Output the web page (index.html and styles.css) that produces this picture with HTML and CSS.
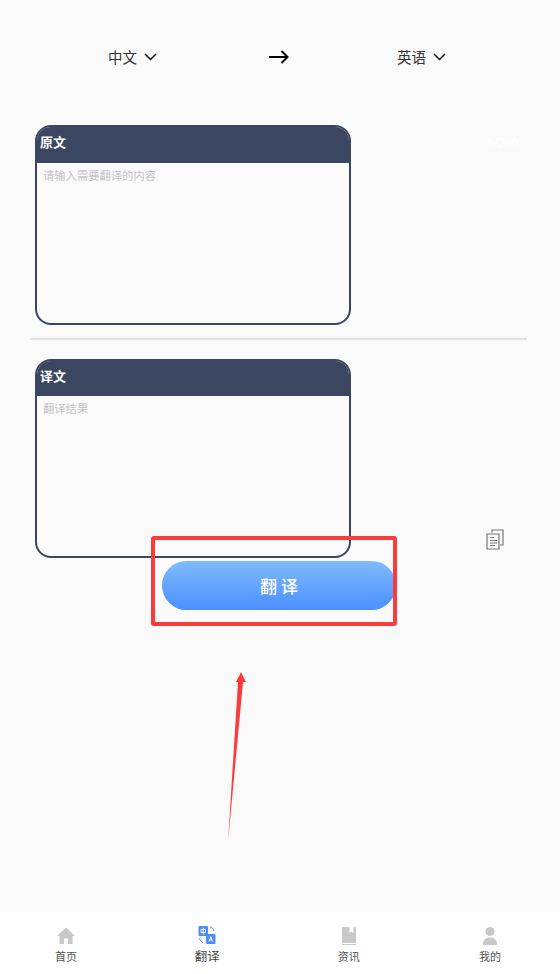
FILE: index.html
```html
<!DOCTYPE html>
<html lang="zh">
<head>
<meta charset="utf-8">
<title>翻译</title>
<link rel="stylesheet" href="styles.css">
</head>
<body>
<div class="page">
  <header class="langs">
    <div class="lang lang-from"><span>中文</span>
      <svg class="chev" viewBox="0 0 13 8"><path d="M1 1l5.500 5.500L12 1"/></svg>
    </div>
    <svg class="swap" viewBox="0 0 20 14"><path d="M0 7h18.500M12.500 1l6 6-6 6"/></svg>
    <div class="lang lang-to"><span>英语</span>
      <svg class="chev" viewBox="0 0 13 8"><path d="M1 1l5.500 5.500L12 1"/></svg>
    </div>
  </header>

  <section class="row row-source">
    <div class="card">
      <div class="card-head">原文</div>
      <div class="card-body">请输入需要翻译的内容</div>
    </div>
    <span class="count">0/200</span>
  </section>

  <hr class="divider">

  <section class="row row-result">
    <div class="card">
      <div class="card-head">译文</div>
      <div class="card-body">翻译结果</div>
    </div>
    <svg class="copy" viewBox="0 0 18 21">
      <path d="M6 3.500V1h11v15h-3"/>
      <path d="M1 5h12v15H1z"/>
      <path d="M4 8.500h4M4 11.500h7M4 14h7M4 16.500h5"/>
    </svg>
  </section>

  <button class="translate" type="button">翻 译</button>

  <nav class="tabs">
    <div class="tab">
      <svg class="tab-icon" viewBox="0 0 20 20"><path fill="#c9c9c9" d="M10 1.500 1 10h2.500v8h4.500v-5.500h4V18h4.500v-8H19z"/></svg>
      <span>首页</span>
    </div>
    <div class="tab">
      <svg class="tab-icon" viewBox="0 0 20 20">
        <rect x="1.500" y="0" width="9.500" height="10" rx="1" fill="#4a8dfb"/>
        <rect x="9" y="8" width="9.500" height="10" rx="1" fill="#4a8dfb"/>
        <path fill="none" stroke="#fff" stroke-width="1" d="M4 3.500h4.500v3H4zM6.200 1.800v6.500"/>
        <path fill="none" stroke="#fff" stroke-width="1" d="M12 15.500l1.800-5 1.800 5M12.700 14h2.200"/>
        <path fill="none" stroke="#4a8dfb" stroke-width="1" d="M13 1c2 .3 3.500 1.500 4 4M2.500 12c.3 2 1.500 3.500 3.500 4.500"/>
      </svg>
      <span class="tab-active">翻译</span>
    </div>
    <div class="tab">
      <svg class="tab-icon" viewBox="0 0 20 20"><path fill="#c9c9c9" d="M3 1h7.500v6l2-1.500 2 1.500V1H17v16H3z"/><path fill="#c9c9c9" d="M3 18h14v1H3z"/></svg>
      <span>资讯</span>
    </div>
    <div class="tab">
      <svg class="tab-icon" viewBox="0 0 20 20"><circle cx="10" cy="5.500" r="4.500" fill="#c9c9c9"/><path fill="#c9c9c9" d="M3 18.500c0-4.500 3-7 7-7s7 2.500 7 7c0 .5-.5.500-1 .500H4c-.5 0-1 0-1-.500z"/></svg>
      <span>我的</span>
    </div>
  </nav>

  <div class="mark-box"></div>
  <svg class="mark-arrow" viewBox="0 0 24 172"><path fill="#fb3b3b" d="M14 0l5 10H16L1 170 11 10H9z"/></svg>
</div>
</body>
</html>
```
FILE: styles.css
```css
* { box-sizing: border-box; }
html, body { margin: 0; padding: 0; }
body {
  font-family: "Noto Sans CJK SC", "Noto Sans", sans-serif;
  background: #fafafa;
}
.page {
  position: relative;
  width: 560px;
  height: 974px;
  overflow: hidden;
  display: flex;
  flex-direction: column;
  background: #fafafa;
}
.langs {
  display: flex;
  align-items: center;
  height: 30px;
  margin-top: 42px;
  padding-left: 108px;
}
.lang {
  display: flex;
  align-items: center;
  gap: 7px;
  font-size: 14.500px;
  color: #333;
  line-height: 22px;
}
.lang-to { margin-left: 108px; }
.chev { width: 13px; height: 8px; fill: none; stroke: #111; stroke-width: 1.500; }
.swap { width: 20px; height: 14px; margin-left: 112px; fill: none; stroke: #000; stroke-width: 2; }
.row {
  display: flex;
  padding-left: 35px;
  position: relative;
}
.row-source { margin-top: 53px; }
.row-result { margin-top: 19px; }
.card {
  width: 316px;
  height: 200px;
  border: 2px solid #3b4660;
  border-radius: 16px;
  overflow: hidden;
  display: flex;
  flex-direction: column;
  background: #fafafa;
}
.row-result .card { height: 199px; }
.card-head {
  height: 36px;
  flex: none;
  background: #3b4660;
  color: #fff;
  font-size: 13px;
  font-weight: 700;
  line-height: 29px;
  padding-left: 3px;
}
.row-result .card-head { height: 35px; }
.card-body {
  padding: 2px 0 0 6px;
  font-size: 11.300px;
  line-height: 20px;
  color: #c4c4c4;
}
.count {
  margin: 7px 0 0 136px;
  font-size: 12px;
  line-height: 20px;
  color: #fff;
}
.divider {
  width: 497px;
  height: 2px;
  margin: 13px 0 0 30px;
  border: 0;
  background: #e0e0e0;
}
.copy {
  width: 18px;
  height: 21px;
  margin: 170px 0 0 135px;
  fill: none;
  stroke: #777;
  stroke-width: 1.200;
}
.translate {
  width: 234px;
  height: 49px;
  margin: 3px 0 0 162px;
  border: 0;
  border-radius: 25px;
  background: linear-gradient(#80bbff, #4b8eff);
  color: #fff;
  font: 500 17px "Noto Sans CJK SC", sans-serif;
  padding: 0;
}
.tabs {
  margin-top: auto;
  height: 62px;
  background: #fff;
  display: flex;
  justify-content: space-between;
  padding: 14px 50px 0 46px;
}
.tab {
  width: 40px;
  display: flex;
  flex-direction: column;
  align-items: center;
  font-size: 11px;
  line-height: 16px;
  color: #555;
}
.tab-icon { width: 20px; height: 20px; margin-bottom: 2px; }
.tab-active { font-size: 12.500px; color: #444; }
.mark-box {
  position: absolute;
  left: 151px;
  top: 536px;
  width: 246px;
  height: 90px;
  border: 4px solid #fb3b3b;
  border-radius: 3px;
}
.mark-arrow {
  position: absolute;
  left: 227px;
  top: 672px;
  width: 24px;
  height: 172px;
}
```
